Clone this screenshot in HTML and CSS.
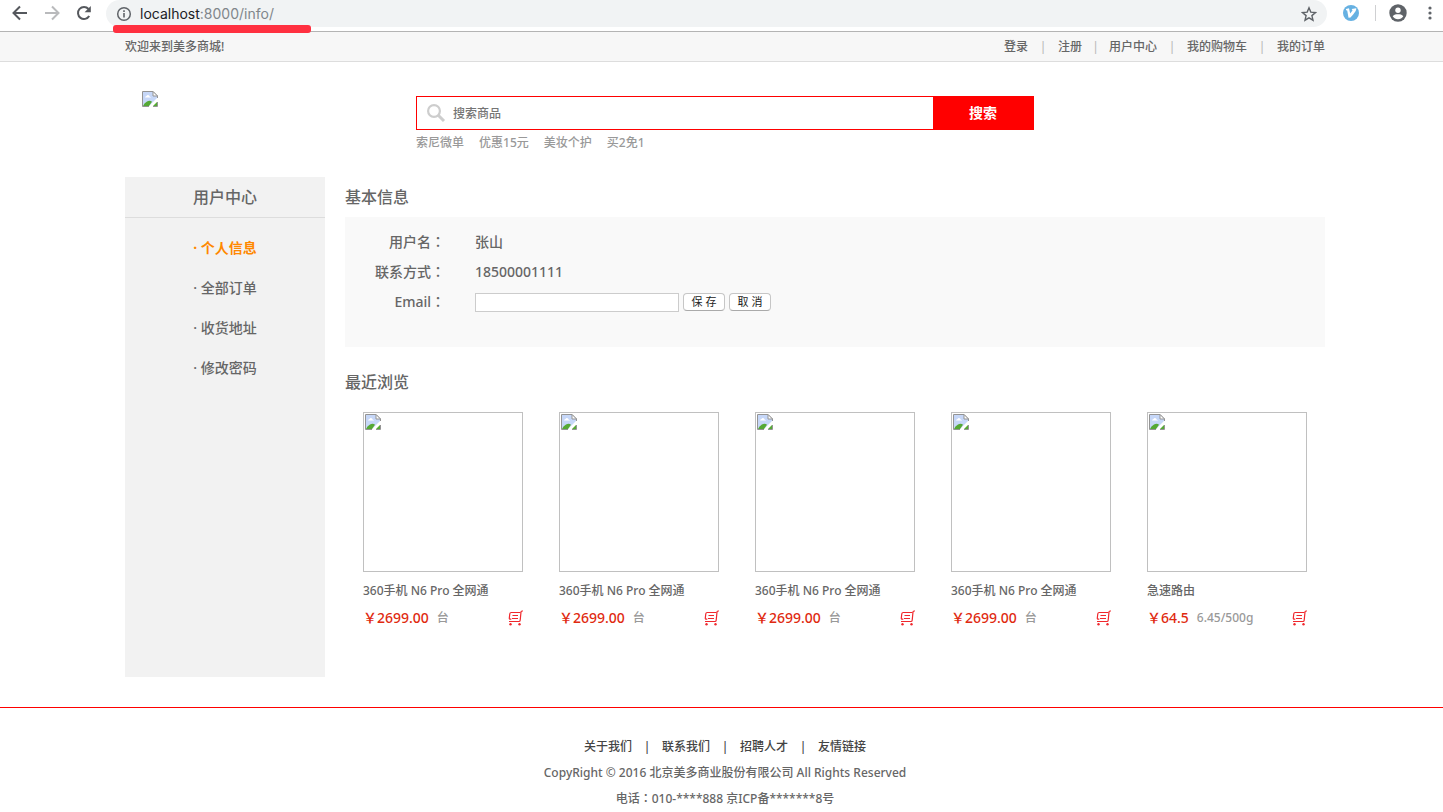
FILE: index.html
```html
<!DOCTYPE html>
<html lang="zh-CN">
<head>
<meta charset="utf-8">
<title>用户中心</title>
<link rel="stylesheet" href="styles.css">
</head>
<body>
<svg class="sprites" width="0" height="0" aria-hidden="true">
  <symbol id="missing" viewBox="0 0 16 16">
    <path d="M1 1h10l4 4v2L7 15H1z" fill="#c6d7f8"/>
    <path d="M3 6.500q.3-1.500 1.500-1.500.8-1.500 2.200-.8 1 .5 1 1.500 1.300 0 1.300.800z" fill="#fff"/>
    <path d="M1 15q1-3 4-4.500 3-1.500 5 .3L7 15z" fill="#55a935"/>
    <path d="M11 15l4-4v4z" fill="#55a935"/>
    <path d="M7 15.500H.5V.5h10.500l4.500 4.500v2M15.500 11v4.500H11" fill="none" stroke="#949494"/>
    <path d="M11 .5v4.500h4.500z" fill="#fff" stroke="#949494"/>
  </symbol>
  <symbol id="cart" viewBox="0 0 15 16">
    <g fill="none" stroke="#f0282d" stroke-width="1.200">
      <path d="M15 1h-1c-.7 0-1 .3-1 1l-.8 8.200c-.1.900-.5 1.300-1.300 1.300H1"/>
      <path d="M12.500 2.500H3.200c-.9 0-1.300.4-1.400 1.200L1.300 8c-.1.800.2 1.200 1 1.200h1M4.500 5.500h5.500M4 8.500h6"/>
    </g>
    <circle cx="2.500" cy="14.300" r="1.200" fill="#f0282d"/><circle cx="11.500" cy="14.300" r="1.200" fill="#f0282d"/>
  </symbol>
</svg>

<div class="browser">
  <button class="tool" aria-label="后退"><svg width="16" height="16" viewBox="0 0 16 16"><path d="M15 8H2M8 1.500L1.500 8 8 14.500" fill="none" stroke="#55585d" stroke-width="2"/></svg></button>
  <button class="tool" aria-label="前进"><svg width="16" height="16" viewBox="0 0 16 16"><path d="M1 8h13M8 1.500L14.500 8 8 14.500" fill="none" stroke="#b9babc" stroke-width="2"/></svg></button>
  <button class="tool" aria-label="刷新"><svg width="16" height="16" viewBox="0 0 16 16"><path d="M13.200 11A6 6 0 1 1 12.500 4" fill="none" stroke="#55585d" stroke-width="2"/><path d="M14.800 1v6.200H8.600z" fill="#55585d"/></svg></button>
  <div class="omnibox">
    <svg width="16" height="16" viewBox="0 0 16 16"><circle cx="8" cy="8" r="6.300" fill="none" stroke="#5f6368" stroke-width="1.500"/><path d="M8 7v4.500M8 4.300V6" stroke="#5f6368" stroke-width="1.600"/></svg>
    <span class="url">localhost<span class="path">:8000/info/</span></span>
    <button class="tool star" aria-label="收藏"><svg width="16" height="16" viewBox="0 0 16 16"><path d="M8 1.800l1.800 4.300 4.700.4-3.600 3.100 1.100 4.600L8 11.800l-4 2.400 1.100-4.600L1.500 6.500l4.700-.4z" fill="none" stroke="#5f6368" stroke-width="1.400"/></svg></button>
  </div>
  <button class="tool" aria-label="扩展"><svg width="16" height="16" viewBox="0 0 16 16"><circle cx="8" cy="8" r="8" fill="#66b1e2"/><path d="M3 4l3-.8 1.200 5.300L9.500 5.500 8.700 4l4.500-.8c.3 2-1 4-5.700 9.300l-2 .2L4.200 5.400 3 5.200z" fill="#fff"/></svg></button>
  <span class="divider"></span>
  <button class="tool" aria-label="账户"><svg width="18" height="18" viewBox="0 0 18 18"><circle cx="9" cy="9" r="8.700" fill="#5f6368"/><circle cx="9" cy="6.200" r="2.700" fill="#fff"/><path d="M3.700 12.300C5 10.300 7 10.200 9 10.200s4 .1 5.300 2.100c-1.200 1.900-3.100 2.900-5.300 2.900s-4.100-1-5.300-2.900z" fill="#fff"/></svg></button>
  <button class="tool menu" aria-label="菜单"><svg width="4" height="14" viewBox="0 0 4 14"><g fill="#5f6368"><circle cx="2" cy="2" r="1.600"/><circle cx="2" cy="7" r="1.600"/><circle cx="2" cy="12" r="1.600"/></g></svg></button>
  <span class="mark"></span>
</div>

<div class="topbar band">
  <div class="wrap topline">
    <span>欢迎来到美多商城!</span>
    <nav class="links">
      <a href="#">登录</a><span class="sep">|</span><a href="#">注册</a><span class="sep near">|</span><a href="#">用户中心</a><span class="sep">|</span><a href="#">我的购物车</a><span class="sep">|</span><a href="#">我的订单</a>
    </nav>
  </div>
</div>

<header class="band">
  <div class="wrap head">
    <a class="logo" href="#" aria-label="首页"><svg width="16" height="16"><use href="#missing"/></svg></a>
    <div class="find">
      <form class="search">
        <svg width="20" height="20" viewBox="0 0 20 20"><circle cx="8" cy="8" r="5.900" fill="none" stroke="#cdcdcd" stroke-width="2.200"/><path d="M12 12l6 6" stroke="#cdcdcd" stroke-width="3"/></svg>
        <input type="text" placeholder="搜索商品" aria-label="搜索商品">
        <button type="button">搜索</button>
      </form>
      <nav class="hot"><a href="#">索尼微单</a><a href="#">优惠15元</a><a href="#">美妆个护</a><a href="#">买2免1</a></nav>
    </div>
  </div>
</header>

<main class="band">
  <div class="wrap columns">
    <aside>
      <h3>用户中心</h3>
      <ul>
        <li><a class="active" href="#">· 个人信息</a></li>
        <li><a href="#">· 全部订单</a></li>
        <li><a href="#">· 收货地址</a></li>
        <li><a href="#">· 修改密码</a></li>
      </ul>
    </aside>
    <div class="content">
      <h3>基本信息</h3>
      <form class="info">
        <div class="row"><span class="label">用户名<span class="colon" lang="zh-TW">：</span></span><span>张山</span></div>
        <div class="row"><span class="label">联系方式<span class="colon" lang="zh-TW">：</span></span><span>18500001111</span></div>
        <div class="row"><label class="label" for="email">Email<span class="colon" lang="zh-TW">：</span></label><span class="edit"><input id="email" type="email"><button type="button">保 存</button><button type="button">取 消</button></span></div>
      </form>
      <h3 class="recent">最近浏览</h3>
      <ul class="goods">
        <li><a class="pic" href="#" aria-label="360手机"><svg width="16" height="16"><use href="#missing"/></svg></a><h4><a href="#">360手机 N6 Pro 全网通</a></h4><div class="buy"><span class="price">￥2699.00</span><span class="unit">台</span><a class="cart" href="#" aria-label="加入购物车"><svg width="15" height="16"><use href="#cart"/></svg></a></div></li>
        <li><a class="pic" href="#" aria-label="360手机"><svg width="16" height="16"><use href="#missing"/></svg></a><h4><a href="#">360手机 N6 Pro 全网通</a></h4><div class="buy"><span class="price">￥2699.00</span><span class="unit">台</span><a class="cart" href="#" aria-label="加入购物车"><svg width="15" height="16"><use href="#cart"/></svg></a></div></li>
        <li><a class="pic" href="#" aria-label="360手机"><svg width="16" height="16"><use href="#missing"/></svg></a><h4><a href="#">360手机 N6 Pro 全网通</a></h4><div class="buy"><span class="price">￥2699.00</span><span class="unit">台</span><a class="cart" href="#" aria-label="加入购物车"><svg width="15" height="16"><use href="#cart"/></svg></a></div></li>
        <li><a class="pic" href="#" aria-label="360手机"><svg width="16" height="16"><use href="#missing"/></svg></a><h4><a href="#">360手机 N6 Pro 全网通</a></h4><div class="buy"><span class="price">￥2699.00</span><span class="unit">台</span><a class="cart" href="#" aria-label="加入购物车"><svg width="15" height="16"><use href="#cart"/></svg></a></div></li>
        <li><a class="pic" href="#" aria-label="急速路由"><svg width="16" height="16"><use href="#missing"/></svg></a><h4><a href="#">急速路由</a></h4><div class="buy"><span class="price">￥64.5</span><span class="unit">6.45/500g</span><a class="cart" href="#" aria-label="加入购物车"><svg width="15" height="16"><use href="#cart"/></svg></a></div></li>
      </ul>
    </div>
  </div>
</main>

<footer class="band">
  <nav class="links"><a href="#">关于我们</a><span class="sep">|</span><a href="#">联系我们</a><span class="sep">|</span><a href="#">招聘人才</a><span class="sep">|</span><a href="#">友情链接</a></nav>
  <p>CopyRight © 2016 北京美多商业股份有限公司 All Rights Reserved</p>
  <p>电话<span class="colon" lang="zh-TW">：</span>010-****888 京ICP备*******8号</p>
</footer>
</body>
</html>
```
FILE: styles.css
```css
* { box-sizing: border-box; margin: 0; padding: 0; }
body {
  font: 500 12px/26px "Noto Sans", "Noto Sans CJK SC", sans-serif;
  color: #666;
  background: #fff;
  overflow-x: hidden;
}
ul { list-style: none; }
a { color: inherit; text-decoration: none; }
svg { display: block; flex: none; }
button, input { font: inherit; color: inherit; }
.sprites { position: absolute; }
.colon { font-family: "Noto Sans", "Noto Sans CJK TC", sans-serif; }

/* browser toolbar */
.browser {
  position: relative;
  display: flex;
  align-items: flex-start;
  height: 32px;
  padding: 0 11px 0 12px;
  border-bottom: 1px solid #b4b4b4;
}
.tool {
  display: flex;
  align-items: center;
  justify-content: center;
  flex: none;
  width: 16px;
  height: 26px;
  margin-right: 16px;
  border: 0;
  background: none;
}
.omnibox {
  flex: 1;
  display: flex;
  align-items: center;
  height: 27px;
  margin: 0 16px 0 -2px;
  padding: 0 10px;
  border-radius: 14px;
  background: #f1f3f4;
}
.url { flex: 1; margin-left: 8px; font: 400 14px/26px Inter, Roboto, sans-serif; color: #202124; }
.path { color: #80868b; }
.star { margin-right: 0; }
.divider { width: 1px; height: 16px; margin: 5px 14px 0 0; background: #cfd0d2; }
.tool.menu { width: 4px; margin: 0 0 0 6px; }
.mark {
  position: absolute;
  left: 113px;
  top: 25px;
  width: 198px;
  height: 8px;
  border-radius: 3px;
  background: #ff3040;
}

/* page bands share one centred column */
.band { padding-left: 7px; }
.wrap { max-width: 1200px; margin: 0 auto; }
.links { display: flex; }
.sep { width: 30px; text-align: center; }
.sep.near { width: 27px; }

.topbar { background: #f7f7f7; border-bottom: 1px solid #ddd; }
.topline { display: flex; justify-content: space-between; line-height: 29px; }
.topbar .sep { color: #bbb; }

.head { display: flex; height: 115px; }
.logo { padding: 29px 0 0 17px; width: 291px; }
.find { width: 618px; padding-top: 34px; }
.search { display: flex; align-items: center; height: 34px; border: 1px solid #f00; padding-left: 9px; }
.search input { flex: 1; height: 32px; border: 0; padding-left: 7px; outline: 0; background: none; }
.search input::placeholder { color: #757575; opacity: 1; }
.search button { width: 100px; height: 32px; border: 0; background: #f00; color: #fff; font-size: 14px; font-weight: 700; }
.hot { display: flex; gap: 15px; color: #999; }

.columns { display: flex; gap: 20px; }
h3 { font-size: 16px; font-weight: 500; line-height: 40px; }
aside { width: 200px; height: 500px; background: #f2f2f2; text-align: center; }
aside h3 { height: 41px; border-bottom: 1px solid #ddd; }
aside ul { padding-top: 10px; font-size: 14px; line-height: 40px; }
.active { color: #ff8800; font-weight: 700; }
.content { flex: 1; min-width: 0; }

.info { height: 130px; padding-top: 10px; background: #f9f9f9; font-size: 14px; line-height: 30px; }
.row { display: flex; gap: 30px; height: 30px; }
.label { width: 100px; text-align: right; }
.edit { display: flex; align-items: center; gap: 4px; }
.edit input { width: 204px; height: 19px; border: 1px solid #ccc; background: #fff; }
.edit button {
  width: 42px;
  height: 18px;
  border: 1px solid #c6c6c6;
  border-bottom-color: #aaa;
  border-radius: 4px;
  background: #fff;
  color: #222;
  font-size: 11px;
  font-weight: 400;
  line-height: 16px;
}
.recent { margin-top: 15px; }

.goods { display: flex; justify-content: space-around; padding-top: 10px; }
.goods li { width: 160px; }
.pic { display: block; height: 160px; padding: 1px; border: 1px solid #c0c0c0; }
.goods h4 { font-size: 12px; font-weight: 500; line-height: 20px; padding: 9px 0 7px; }
.buy { display: flex; align-items: center; line-height: 20px; }
.price { font-size: 14px; color: #df2a10; }
.unit { margin-left: 8px; color: #999; }
.cart { margin-left: auto; }

footer {
  display: flex;
  flex-direction: column;
  align-items: center;
  margin-top: 30px;
  padding-top: 26px;
  border-top: 1px solid #f00;
}
footer .links { color: #444; }
```
